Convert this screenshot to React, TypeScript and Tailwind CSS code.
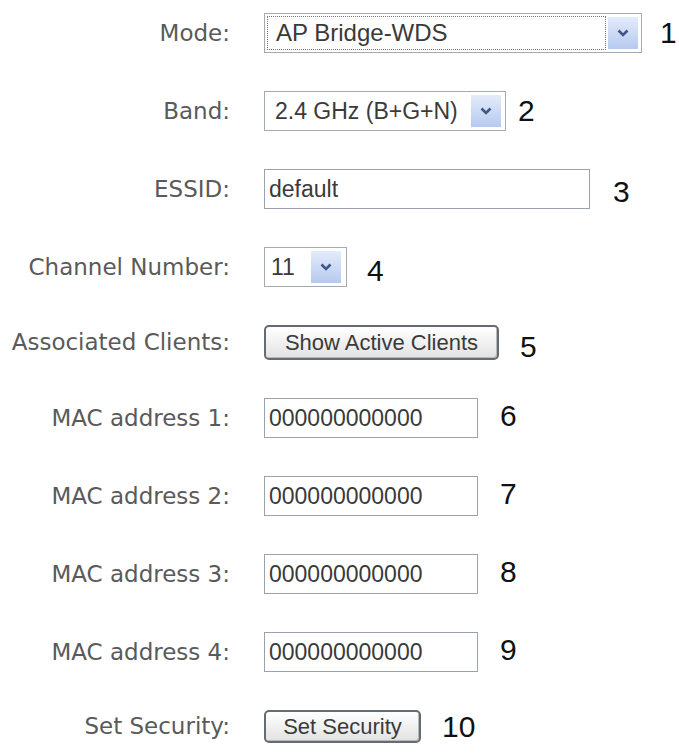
import React from "react";

const labelFont = { fontFamily: '"DejaVu Sans", Verdana, sans-serif' };
const ctrlFont = { fontFamily: '"Liberation Sans", Arial, sans-serif' };

const Chevron = () => (
    <div className="flex h-[32px] w-[30px] items-center justify-center bg-linear-to-b from-[#e4ecfb] to-[#b6c9ee]">
        <svg width="12" height="8" viewBox="0 0 12 8">
            <path d="M1.5 1.5 L6 6 L10.5 1.5" fill="none" stroke="#3e5787" strokeWidth="2.6" />
        </svg>
    </div>
);

const Num = ({ n, className }: { n: string; className: string }) => (
    <span className={`text-[30px] leading-none text-[#111] ${className}`} style={ctrlFont}>
        {n}
    </span>
);

const Row = ({ label, h, children }: { label: string; h: string; children: React.ReactNode }) => (
    <div className={`flex items-center ${h}`}>
        <div className="w-[231px] pr-[1px] text-right text-[23px] leading-none text-[#5a5a5a]" style={labelFont}>
            {label}
        </div>
        <div className="ml-[33px] flex h-full items-center">{children}</div>
    </div>
);

const TextBox = ({ value, w }: { value: string; w: string }) => (
    <div
        className={`flex h-full items-center border border-[#9aa3ad] bg-white pl-[4px] text-[23px] text-[#3a3a3a] ${w}`}
        style={ctrlFont}
    >
        {value}
    </div>
);

const Button = ({ text, w }: { text: string; w: string }) => (
    <div
        className={`flex h-full items-center justify-center rounded-[5px] border-2 border-[#646b73] bg-linear-to-b from-white to-[#e2e2e2] text-[22px] text-[#3a3a3a] shadow-[inset_-1px_-1px_0_#b8b8b8] ${w}`}
        style={ctrlFont}
    >
        {text}
    </div>
);

export default function App() {
    return (
        <div className="min-h-screen w-[679px] bg-white">
            <div className="flex flex-col gap-[38px] pt-[13px]">
                <Row label="Mode:" h="h-[40px]">
                    <div className="flex h-full w-[378px] items-center border border-[#a3aab3] bg-white pr-[3px]" style={ctrlFont}>
                        <div className="m-[2px] flex h-[34px] flex-1 items-center border border-dotted border-[#777] pl-[8px] text-[24px] text-[#3a3a3a]">
                            AP Bridge-WDS
                        </div>
                        <Chevron />
                    </div>
                    <Num n="1" className="ml-[18px]" />
                </Row>

                <Row label="Band:" h="h-[40px]">
                    <div className="flex h-full w-[242px] items-center justify-between border border-[#a3aab3] bg-white pl-[10px] pr-[4px] text-[23px] text-[#3a3a3a]" style={ctrlFont}>
                        <span>2.4 GHz (B+G+N)</span>
                        <Chevron />
                    </div>
                    <Num n="2" className="ml-[12px]" />
                </Row>

                <Row label="ESSID:" h="h-[40px]">
                    <TextBox value="default" w="w-[326px]" />
                    <Num n="3" className="ml-[23px] mt-[6px]" />
                </Row>

                <Row label="Channel Number:" h="h-[40px]">
                    <div className="flex h-full w-[83px] items-center justify-between border border-[#a3aab3] bg-white pl-[6px] pr-[5px] text-[23px] text-[#3a3a3a]" style={ctrlFont}>
                        <span>11</span>
                        <Chevron />
                    </div>
                    <Num n="4" className="ml-[20px] mt-[8px]" />
                </Row>

                <Row label="Associated Clients:" h="h-[35px]">
                    <Button text="Show Active Clients" w="w-[235px]" />
                    <Num n="5" className="ml-[21px] mt-[8px]" />
                </Row>

                {["1", "2", "3", "4"].map((i, k) => (
                    <Row key={i} label={`MAC address ${i}:`} h="h-[40px]">
                        <TextBox value="000000000000" w="w-[214px]" />
                        <Num n={String(6 + k)} className="ml-[22px] -mt-[4px]" />
                    </Row>
                ))}

                <Row label="Set Security:" h="h-[33px]">
                    <Button text="Set Security" w="w-[157px]" />
                    <Num n="10" className="ml-[21px]" />
                </Row>
            </div>
        </div>
    );
}
